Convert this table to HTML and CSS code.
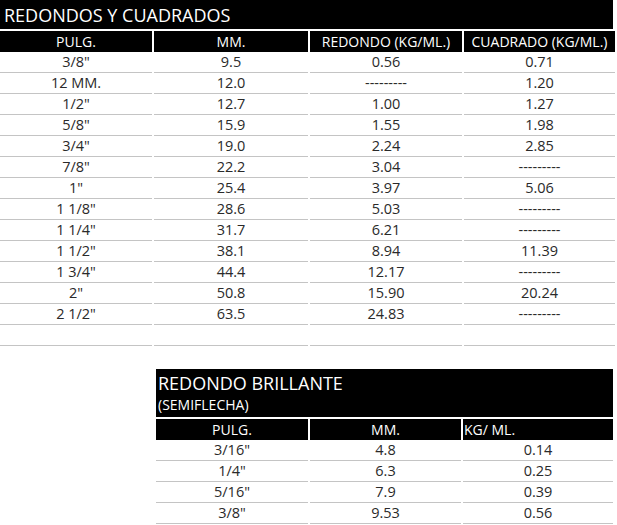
FILE: index.html
```html
<!DOCTYPE html>
<html lang="es">
<head>
<meta charset="utf-8">
<title>Redondos y Cuadrados</title>
<link rel="stylesheet" href="styles.css">
</head>
<body>
<div class="sheet">
  <div class="title">REDONDOS Y CUADRADOS</div>
  <table class="grid grid-main">
    <colgroup><col class="c1"><col class="c2"><col class="c3"><col class="c4"></colgroup>
    <thead>
      <tr><th>PULG.</th><th>MM.</th><th>REDONDO (KG/ML.)</th><th>CUADRADO (KG/ML.)</th></tr>
    </thead>
    <tbody>
      <tr><td>3/8"</td><td>9.5</td><td>0.56</td><td>0.71</td></tr>
      <tr><td>12 MM.</td><td>12.0</td><td>---------</td><td>1.20</td></tr>
      <tr><td>1/2"</td><td>12.7</td><td>1.00</td><td>1.27</td></tr>
      <tr><td>5/8"</td><td>15.9</td><td>1.55</td><td>1.98</td></tr>
      <tr><td>3/4"</td><td>19.0</td><td>2.24</td><td>2.85</td></tr>
      <tr><td>7/8"</td><td>22.2</td><td>3.04</td><td>---------</td></tr>
      <tr><td>1"</td><td>25.4</td><td>3.97</td><td>5.06</td></tr>
      <tr><td>1 1/8"</td><td>28.6</td><td>5.03</td><td>---------</td></tr>
      <tr><td>1 1/4"</td><td>31.7</td><td>6.21</td><td>---------</td></tr>
      <tr><td>1 1/2"</td><td>38.1</td><td>8.94</td><td>11.39</td></tr>
      <tr><td>1 3/4"</td><td>44.4</td><td>12.17</td><td>---------</td></tr>
      <tr><td>2"</td><td>50.8</td><td>15.90</td><td>20.24</td></tr>
      <tr><td>2 1/2"</td><td>63.5</td><td>24.83</td><td>---------</td></tr>
      <tr><td></td><td></td><td></td><td></td></tr>
    </tbody>
  </table>

  <div class="block">
    <div class="title2">
      <div class="t2-main">REDONDO BRILLANTE</div>
      <div class="t2-sub">(SEMIFLECHA)</div>
    </div>
    <table class="grid grid-small">
      <colgroup><col class="s1"><col class="s2"><col class="s3"></colgroup>
      <thead>
        <tr><th>PULG.</th><th>MM.</th><th class="left">KG/ ML.</th></tr>
      </thead>
      <tbody>
        <tr><td>3/16"</td><td>4.8</td><td>0.14</td></tr>
        <tr><td>1/4"</td><td>6.3</td><td>0.25</td></tr>
        <tr><td>5/16"</td><td>7.9</td><td>0.39</td></tr>
        <tr><td>3/8"</td><td>9.53</td><td>0.56</td></tr>
      </tbody>
    </table>
  </div>
</div>
</body>
</html>
```

FILE: styles.css
```css
html, body {
  margin: 0;
  padding: 0;
  background: #fff;
}
body {
  font-family: "Open Sans", "Noto Sans", sans-serif;
  color: #2a2a2a;
}
.sheet {
  width: 613px;
}
.title {
  background: #000;
  color: #fff;
  height: 29px;
  line-height: 31px;
  font-size: 18px;
  padding-left: 4px;
  margin-bottom: 2px;
  white-space: nowrap;
}
.grid {
  border-collapse: separate;
  border-spacing: 2px 0;
  table-layout: fixed;
  margin: 0 -2px;
  width: calc(100% + 4px);
}
.grid th {
  background: #000;
  color: #fff;
  font-weight: normal;
  font-size: 14px;
  height: 21px;
  line-height: 21px;
  padding: 0;
  text-align: center;
  white-space: nowrap;
  overflow: hidden;
}
.grid th.left {
  text-align: left;
  padding-left: 1px;
}
.grid td {
  font-size: 14.5px;
  height: 20px;
  line-height: 20px;
  padding: 0;
  text-align: center;
  border-bottom: 1px solid #c4c4c4;
  white-space: nowrap;
}
.c1 { width: 152px; }
.c2 { width: 154px; }
.c3 { width: 152px; }
.c4 { width: 151px; }

.block {
  margin-top: 23px;
  margin-left: 156px;
}
.title2 {
  background: #000;
  color: #fff;
  height: 48px;
  margin-bottom: 2px;
  padding-left: 2px;
}
.t2-main {
  font-size: 18px;
  height: 26px;
  line-height: 29px;
}
.t2-sub {
  font-size: 14px;
  height: 22px;
  line-height: 20px;
}
.s1 { width: 152px; }
.s2 { width: 151px; }
.s3 { width: 150px; }
```
